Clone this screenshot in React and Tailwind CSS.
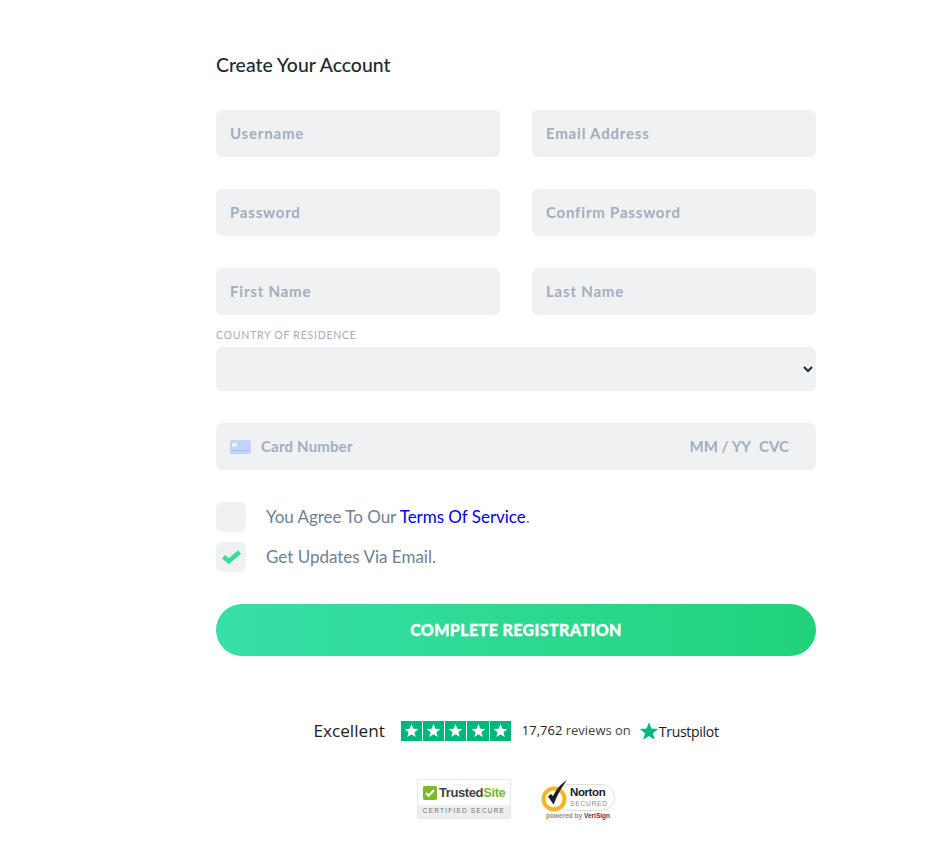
import React, { useState } from "react";

const Field = ({ placeholder, type = "text" }) => (
  <input
    type={type}
    placeholder={placeholder}
    className="h-[47px] w-full rounded-md bg-[#f0f1f3] px-[14px] pb-[2px] text-[15px] font-bold tracking-[0.8px] text-[#2d3748] outline-none placeholder:text-[#a3adbd]"
  />
);

const Star = ({ className }) => (
  <svg viewBox="0 0 24 24" className={className} fill="currentColor">
    <path d="M12 1.5l2.9 7.6 8.1.4-6.3 5.1 2.1 7.9L12 18.1l-6.8 4.4 2.1-7.9L1 9.5l8.1-.4z" />
  </svg>
);

const TrustedSite = () => (
  <div className="flex h-[40px] w-[94px] flex-col overflow-hidden rounded-[2px] border border-[#e8e8e8] bg-white">
    <div className="flex h-[25px] items-center pl-[5px]">
      <svg viewBox="0 0 16 16" className="h-[14px] w-[14px]">
        <rect width="16" height="16" rx="2" fill="#7ab929" />
        <path d="M3.5 8l3 3 6-6.5" fill="none" stroke="#fff" strokeWidth="2.4" />
      </svg>
      <span className="ml-[2px] text-[13px] leading-none font-bold tracking-[-0.4px] text-[#444] [font-family:'Liberation_Sans',sans-serif]">
        Trusted<span className="text-[#7ab929]">Site</span>
      </span>
    </div>
    <div className="flex flex-1 items-center justify-center bg-[#eeeeee] text-[6.5px] leading-none tracking-[1.2px] text-[#6f6f6f] [font-family:'Liberation_Sans',sans-serif]">
      CERTIFIED SECURE
    </div>
  </div>
);

const Norton = () => (
  <div className="flex w-[74px] flex-col items-center">
    <svg viewBox="0 0 74 34" className="h-[34px] w-[74px]">
      <rect x="14" y="5.5" width="59.5" height="26" rx="13" fill="#fff" stroke="#d4d4d4" strokeWidth="0.8" />
      <circle cx="13" cy="20" r="10.5" fill="#fff" stroke="#f7b523" strokeWidth="4" />
      <path d="M7 17.5l5.5 8C16 17 20 9 26 1c-6 3.500-11 10-14 16l-2-2z" fill="#1f1f1f" />
      <text x="29" y="17" fontSize="11.5" fontWeight="700" fill="#222" fontFamily="Liberation Sans, sans-serif" letterSpacing="-0.4">Norton</text>
      <text x="29" y="26.5" fontSize="6.6" fill="#8a8a8a" fontFamily="Liberation Sans, sans-serif" letterSpacing="0.8">SECURED</text>
    </svg>
    <div className="mt-[-1px] text-[6.5px] leading-[8px] font-bold whitespace-nowrap text-[#8d8d8d] [font-family:'Liberation_Sans',sans-serif]">
      powered by <span className="text-[#7a1f4b]">VeriSign</span>
    </div>
  </div>
);

export default function App() {
  const [agree, setAgree] = useState(false);
  const [updates, setUpdates] = useState(true);

  const Check = ({ checked, onClick }) => (
    <button
      type="button"
      onClick={onClick}
      className="flex h-[30px] w-[30px] items-center justify-center rounded-md bg-[#f0f1f3]"
    >
      {checked && (
        <svg viewBox="0 0 19 14" className="h-[14px] w-[19px]">
          <path d="M1.500 6.800l5.300 4.500L17.500 2" fill="none" stroke="#3bdc9b" strokeWidth="4.600" />
        </svg>
      )}
    </button>
  );

  return (
    <div className="min-h-[856px] bg-white pt-[53px] pl-[216px] [font-family:Lato,sans-serif]">
      <form className="w-[600px]" onSubmit={(e) => e.preventDefault()}>
        <h2 className="text-[19.4px] leading-[24px] font-medium text-[#1f2933]">Create Your Account</h2>

        <div className="mt-[33px] grid grid-cols-2 gap-x-[32px] gap-y-[32px]">
          <Field placeholder="Username" />
          <Field placeholder="Email Address" type="email" />
          <Field placeholder="Password" type="password" />
          <Field placeholder="Confirm Password" type="password" />
          <Field placeholder="First Name" />
          <Field placeholder="Last Name" />
        </div>

        <label className="mt-[14px] block text-[10.5px] leading-[13px] tracking-[0.75px] text-[#a3adbd] uppercase">
          Country Of Residence
        </label>
        <select className="mt-[5px] block h-[44px] w-full rounded-md bg-[#f0f1f3] px-[10px] text-[15px] text-[#1f2933] outline-none">
          <option></option>
          <option>United States</option>
          <option>United Kingdom</option>
        </select>

        <div className="mt-[32px] flex h-[47px] items-center rounded-md bg-[#f0f1f3] pr-[27px] pl-[14px] text-[15px] font-bold text-[#a3adbd]">
          <svg viewBox="0 0 21 14" className="h-[14px] w-[21px]">
            <rect width="21" height="14" rx="1.500" fill="#c3d3f7" />
            <rect x="2" y="3" width="5" height="3.500" fill="#eef2fb" />
            <path d="M2 10.500h17" stroke="#9db5ee" strokeWidth="1" strokeDasharray="2.500 1" />
          </svg>
          <span className="ml-[10px] tracking-[0.2px]">Card Number</span>
          <span className="ml-auto">MM / YY</span>
          <span className="ml-[8px]">CVC</span>
        </div>

        <div className="mt-[32px] flex items-center">
          <Check checked={agree} onClick={() => setAgree(!agree)} />
          <span className="ml-[20px] text-[17px] tracking-[-0.03px] text-[#718096]">
            You Agree To Our <a href="#terms" className="text-[#0000ee]">Terms Of Service</a>.
          </span>
        </div>
        <div className="mt-[10px] flex items-center">
          <Check checked={updates} onClick={() => setUpdates(!updates)} />
          <span className="ml-[20px] text-[17px] text-[#718096]">Get Updates Via Email.</span>
        </div>

        <button
          type="submit"
          className="mt-[32px] h-[52px] w-full rounded-full bg-gradient-to-r from-[#38dfa8] to-[#20d37a] text-[16px] font-black tracking-[0.4px] text-white uppercase [-webkit-text-stroke:0.3px_white]"
        >
          Complete Registration
        </button>

        <div className="mt-[63px] flex items-center justify-center [font-family:'Open_Sans',sans-serif]">
          <span className="text-[17.2px] leading-[20px] text-[#222]">Excellent</span>
          <div className="ml-[16px] flex gap-[1px]">
            {[0, 1, 2, 3, 4].map((i) => (
              <div key={i} className="flex h-[20px] w-[21.2px] items-center justify-center bg-[#00b67a]">
                <Star className="h-[15px] w-[15px] text-white" />
              </div>
            ))}
          </div>
          <span className="ml-[11px] text-[13px] text-[#222]">
            17,762 <span className="text-[#444]">reviews on</span>
          </span>
          <Star className="ml-[8px] h-[20px] w-[20px] text-[#00b67a]" />
          <span className="mt-[2px] text-[14px] font-medium tracking-[-0.3px] text-[#191919]">Trustpilot</span>
        </div>

        <div className="mt-[37px] flex items-start justify-center gap-[30px]">
          <TrustedSite />
          <Norton />
        </div>
      </form>
    </div>
  );
}
